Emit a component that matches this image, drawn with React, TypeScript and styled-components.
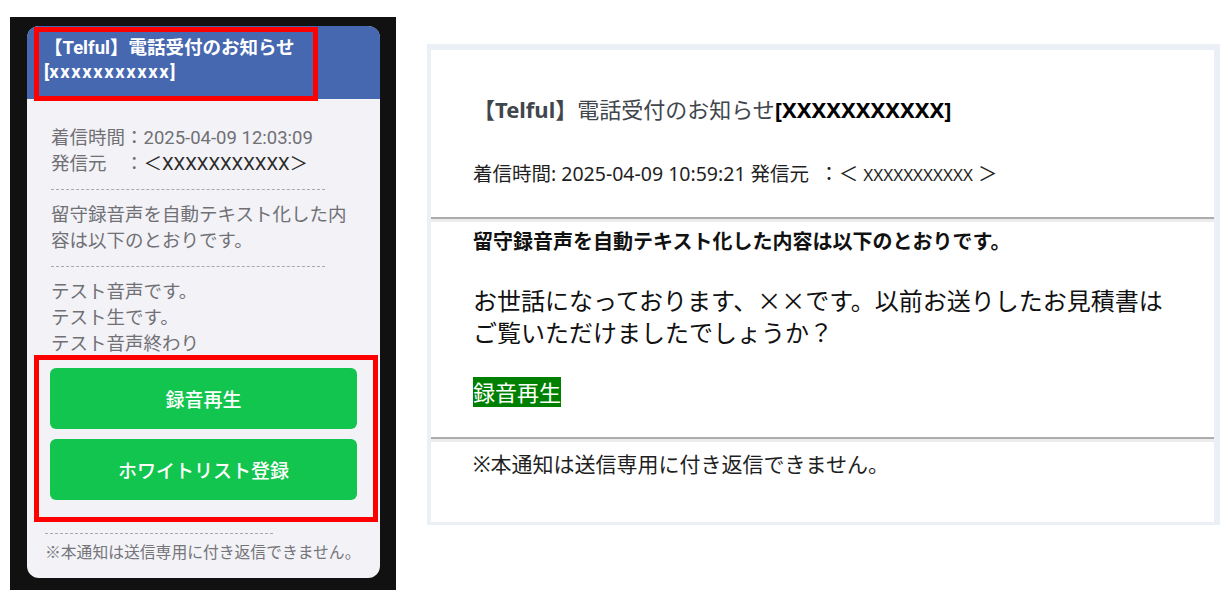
import React from 'react';
import styled, { createGlobalStyle } from 'styled-components';

const GlobalStyle = createGlobalStyle`
  html, body {
    margin: 0;
    padding: 0;
    background: #ffffff;
  }
  body {
    font-family: Roboto, "Noto Sans CJK JP", sans-serif;
  }
`;

const Page = styled.div`
  display: flex;
  align-items: flex-start;
  gap: 31px;
  width: 1228px;
  height: 612px;
  padding-left: 10px;
  box-sizing: border-box;
  overflow: hidden;
`;

/* ---------- left: phone capture ---------- */

const Phone = styled.div`
  box-sizing: border-box;
  width: 386px;
  height: 573px;
  margin-top: 17px;
  padding: 9px 16px 12px 17px;
  background: #111111;
`;

const Card = styled.div`
  display: flex;
  flex-direction: column;
  height: 552px;
  background: #f2f2f7;
  border-radius: 12px;
  overflow: hidden;
`;

const CardHeader = styled.div`
  flex: none;
  display: flex;
  height: 73px;
  padding-left: 7px;
  background: #4568b0;
`;

const Mark = styled.div`
  position: relative;
  box-sizing: border-box;
  border: 5px solid #ff0000;
`;

const HeaderMark = styled(Mark)`
  width: 284px;
  height: 74px;
  margin-top: 1px;
  padding: 4px 0 0 5px;
  color: #ffffff;
  font-size: 18.5px;
  font-weight: 700;
  line-height: 24px;
  white-space: nowrap;
`;

const Code = styled.span`
  letter-spacing: 1.6px;
`;

const CardBody = styled.div`
  padding: 26px 0 0 24px;
  width: 312px;
  color: #707075;
  font-size: 18.5px;
  line-height: 26px;
`;

const Line = styled.div``;

const Sender = styled.span`
  color: #2a2a2a;
`;

const Dashes = styled.div<{ width: number }>`
  width: ${(p) => p.width}px;
  height: 0;
  margin: 12px 0;
  border-top: 1px dashed #a8a8ae;
`;

const ActionsMark = styled(Mark)`
  display: flex;
  flex-direction: column;
  gap: 10px;
  width: 344px;
  margin: -2px 0 0 7px;
  padding: 8px 16px 17px 11px;
`;

const GreenButton = styled.button`
  height: 61px;
  border: none;
  border-radius: 6px;
  background: #12c54e;
  color: #ffffff;
  font-family: Roboto, "Noto Sans CJK JP", sans-serif;
  font-size: 19px;
  font-weight: 500;
  cursor: pointer;
`;

const CardFooter = styled.div`
  padding-left: 18px;
  color: #75757a;
  font-size: 15.8px;
  line-height: 22px;
`;

const FooterDashes = styled(Dashes)`
  margin: 11px 0 8px;
`;

/* ---------- right: mail preview ---------- */

const Mail = styled.div`
  box-sizing: border-box;
  width: 793px;
  height: 481px;
  margin-top: 44px;
  border-style: solid;
  border-color: #ebf0f6;
  border-width: 6px 6px 3px 4px;
  background: #ffffff;
  font-family: "Noto Sans", "Noto Sans CJK JP", sans-serif;
  color: #1a1a1a;
`;

const Section = styled.div<{ top: number; bottom: number }>`
  padding: ${(p) => p.top}px 0 ${(p) => p.bottom}px 42px;
`;

const Rule = styled.div`
  height: 0;
  border-top: 2px solid #acacac;
  border-bottom: 3px solid #ececec;
`;

const Title = styled.div`
  font-size: 22px;
  line-height: 30px;
  color: #41464c;
  white-space: nowrap;
`;

const Strong = styled.span<{ dark?: boolean }>`
  font-weight: 700;
  color: ${(p) => (p.dark ? '#000000' : 'inherit')};
`;

const Meta = styled.div`
  margin-top: 36px;
  font-size: 19.5px;
  line-height: 28px;
  color: #1f1f1f;
  white-space: nowrap;
`;

const Thin = styled.span`
  font-size: 17px;
`;

const Lead = styled.div`
  font-size: 20px;
  font-weight: 700;
  line-height: 28px;
  color: #111111;
`;

const Message = styled.div`
  margin-top: 28px;
  font-family: "Noto Sans CJK JP", sans-serif;
  font-size: 24px;
  line-height: 32px;
  color: #111111;
`;

const PlayLink = styled.a`
  display: inline-block;
  margin-top: 29px;
  background: #008000;
  color: #ffffff;
  font-size: 22px;
  line-height: 30px;
  text-decoration: none;
`;

const Notice = styled.div`
  font-size: 21px;
  line-height: 30px;
  color: #1f1f1f;
`;

const App: React.FC = () => {
  return (
    <>
      <GlobalStyle />
      <Page>
        <Phone>
          <Card>
            <CardHeader>
              <HeaderMark>
                <Line>【Telful】電話受付のお知らせ</Line>
                <Line>
                  [<Code>xxxxxxxxxxx</Code>]
                </Line>
              </HeaderMark>
            </CardHeader>
            <CardBody>
              <Line>着信時間：2025-04-09 12:03:09</Line>
              <Line>
                発信元　：<Sender>＜XXXXXXXXXXX＞</Sender>
              </Line>
              <Dashes width={274} />
              <Line>留守録音声を自動テキスト化した内容は以下のとおりです。</Line>
              <Dashes width={274} />
              <Line>テスト音声です。</Line>
              <Line>テスト生です。</Line>
              <Line>テスト音声終わり</Line>
            </CardBody>
            <ActionsMark>
              <GreenButton>録音再生</GreenButton>
              <GreenButton>ホワイトリスト登録</GreenButton>
            </ActionsMark>
            <CardFooter>
              <FooterDashes width={228} />
              <Line>※本通知は送信専用に付き返信できません。</Line>
            </CardFooter>
          </Card>
        </Phone>

        <Mail>
          <Section top={44} bottom={28}>
            <Title>
              <Strong>【Telful】</Strong>電話受付のお知らせ<Strong dark>[XXXXXXXXXXX]</Strong>
            </Title>
            <Meta>
              着信時間: 2025-04-09 10:59:21 発信元 &nbsp;：＜ <Thin>XXXXXXXXXXX</Thin> ＞
            </Meta>
          </Section>
          <Rule />
          <Section top={6} bottom={30}>
            <Lead>留守録音声を自動テキスト化した内容は以下のとおりです。</Lead>
            <Message>
              お世話になっております、××です。以前お送りしたお見積書は
              <br />
              ご覧いただけましたでしょうか？
            </Message>
            <PlayLink href="#">録音再生</PlayLink>
          </Section>
          <Rule />
          <Section top={7} bottom={0}>
            <Notice>※本通知は送信専用に付き返信できません。</Notice>
          </Section>
        </Mail>
      </Page>
    </>
  );
};

export default App;
